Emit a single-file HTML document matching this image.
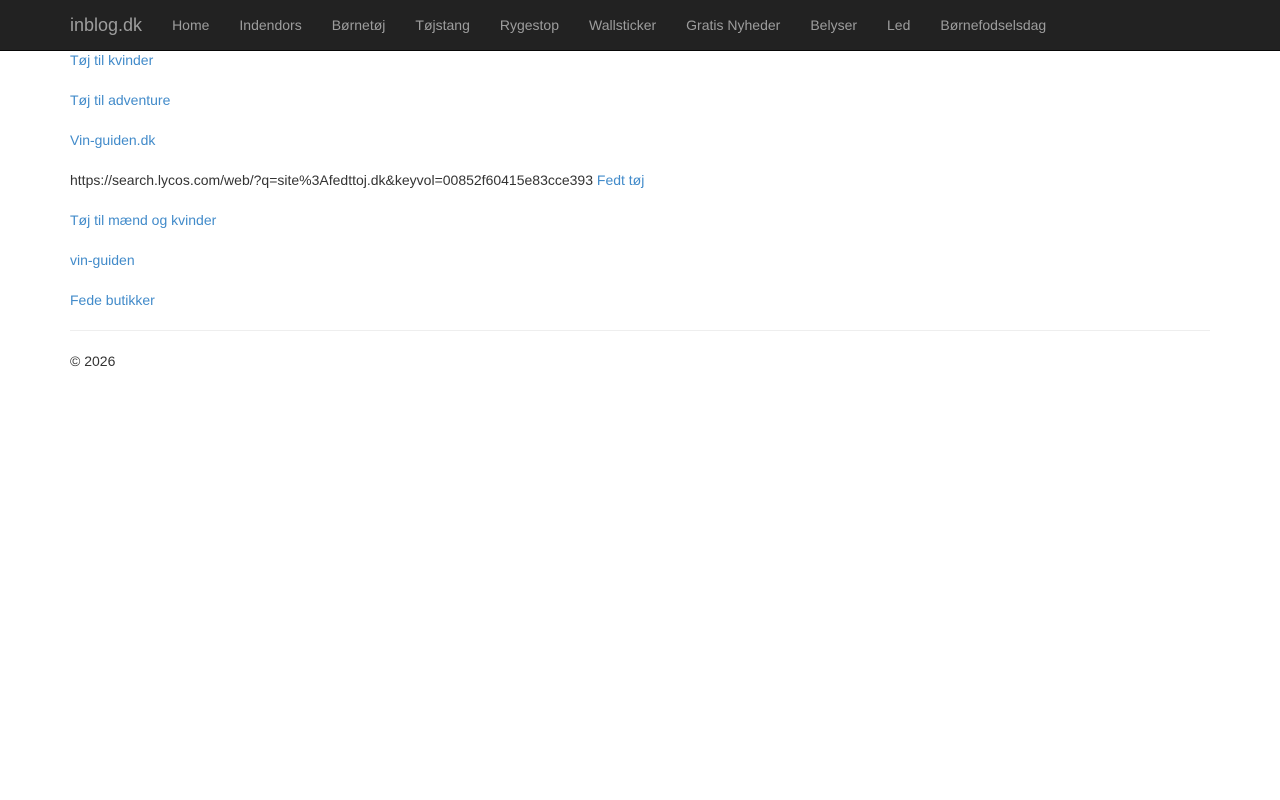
<!DOCTYPE html>
<html><head><meta charset="utf-8"><style>
*{box-sizing:border-box}
body{margin:0;font-family:"Liberation Sans",Helvetica,Arial,sans-serif;font-size:14px;line-height:20px;color:#333;background:#fff}
.nav{position:fixed;top:0;left:0;right:0;height:51px;background:#222;border-bottom:1px solid #080808}
.nav .c{width:1170px;margin:0 auto;padding:0 15px;display:flex}
.brand{color:#9d9d9d;font-size:18px;line-height:20px;padding:15px 15px 15px 0;height:50px;text-decoration:none}
.nav a.l{color:#9d9d9d;text-decoration:none;padding:15px;line-height:20px}
.main{width:1170px;margin:0 auto;padding:50px 15px 0}
p{margin:0 0 20px}
a{color:#428bca;text-decoration:none}
hr{border:0;border-top:1px solid #eee;margin:20px 0}
</style></head><body>
<div class="nav"><div class="c">
<a class="brand" href="#">inblog.dk</a>
<a class="l" href="#">Home</a><a class="l" href="#">Indendors</a><a class="l" href="#">Børnetøj</a><a class="l" href="#">Tøjstang</a><a class="l" href="#">Rygestop</a><a class="l" href="#">Wallsticker</a><a class="l" href="#">Gratis Nyheder</a><a class="l" href="#">Belyser</a><a class="l" href="#">Led</a><a class="l" href="#">Børnefodselsdag</a>
</div></div>
<div class="main">
<p><a href="#">Tøj til kvinder</a></p>
<p><a href="#">Tøj til adventure</a></p>
<p><a href="#">Vin-guiden.dk</a></p>
<p>https://search.lycos.com/web/?q=site%3Afedttoj.dk&amp;keyvol=00852f60415e83cce393 <a href="#">Fedt tøj</a></p>
<p><a href="#">Tøj til mænd og kvinder</a></p>
<p><a href="#">vin-guiden</a></p>
<p style="margin-bottom:0"><a href="#">Fede butikker</a></p>
<hr>
<p>© 2026</p>
</div>
</body></html>
